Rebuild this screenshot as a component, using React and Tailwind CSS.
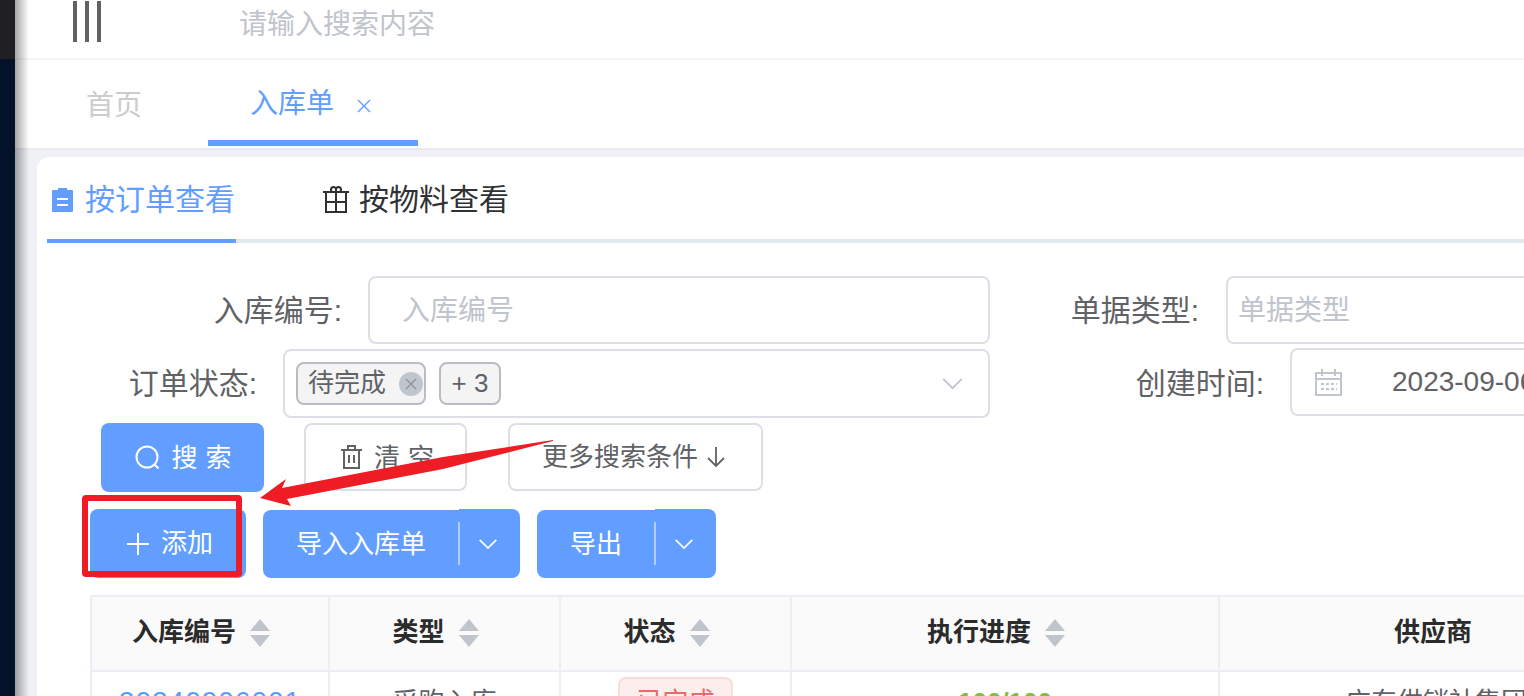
import React from 'react';

const FONT = "font-['Liberation_Sans','Noto_Sans_CJK_SC',sans-serif]";

const Chevron = ({ className }) => (
    <svg className={className} viewBox="0 0 24 14" fill="none" stroke="currentColor" strokeWidth="2">
        <path d="M2 2l10 10L22 2" />
    </svg>
);

const Caret = () => (
    <svg className="w-5 h-7 shrink-0" viewBox="0 0 20 28" fill="#c0c4cc">
        <path d="M10 0l10 12H0z" />
        <path d="M0 16h20L10 28z" />
    </svg>
);

const HeadCell = ({ label, sort }) => (
    <div className={`flex items-center justify-center gap-[14px] pb-[2px] border-r-2 border-[#ebeef5] text-[26px] font-bold text-[#2b2b2b] ${sort ? 'pr-[18px]' : ''}`}>
        <span>{label}</span>
        {sort && <Caret />}
    </div>
);

const SplitButton = ({ label, leftWidth }) => (
    <div className="flex items-end h-[69px] text-white text-[26px]">
        <div className={`flex items-center justify-center h-[68px] bg-[#619eff] rounded-l-lg ${leftWidth}`}>{label}</div>
        <div className="relative flex items-center justify-center w-[61px] h-[69px] pr-1 bg-[#619eff] rounded-r-lg">
            <div className="absolute left-[-1px] top-[13px] w-0.5 h-[43px] bg-white/50"></div>
            <Chevron className="w-[20px] h-[12px]" />
        </div>
    </div>
);

const App = () => {
    return (
        <div className={`${FONT} relative flex w-full h-[696px] overflow-hidden bg-white`}>
            {/* Dark sidebar edge */}
            <div className="flex flex-col w-[15px] shrink-0">
                <div className="h-[59px] bg-[#1f1f24]"></div>
                <div className="flex-1 bg-[#031228]"></div>
            </div>

            <div className="relative flex flex-col flex-1 min-w-0">
                <div className="absolute inset-y-0 left-0 w-[14px] bg-gradient-to-r from-black/35 to-transparent"></div>

                {/* Top bar */}
                <div className="flex items-center h-[60px] shrink-0 border-b-2 border-[#f5f5f6]">
                    <div className="flex justify-between w-[28px] h-[41px] ml-[58px] mb-[16px]">
                        <div className="w-1 bg-[#606266]"></div>
                        <div className="w-1 bg-[#606266]"></div>
                        <div className="w-1 bg-[#606266]"></div>
                    </div>
                    <span className="ml-[138px] mb-[8px] text-[28px] text-[#c0c4cc]">请输入搜索内容</span>
                </div>

                {/* Page tabs */}
                <div className="flex h-[90px] shrink-0 border-b-2 border-[#e8eaee]">
                    <div className="flex items-center w-[193px] h-[84px] pl-[71px] pt-2 text-[28px] text-[#cccccc]">首页</div>
                    <div className="flex items-center w-[210px] h-[86px] pl-[42px] pt-2 border-b-[6px] border-[#619eff] text-[28px] text-[#619eff]">
                        入库单
                        <svg className="w-4 h-4 ml-[22px] mt-1" viewBox="0 0 16 16" stroke="currentColor" strokeWidth="1.4">
                            <path d="M2 2l12 12M14 2L2 14" />
                        </svg>
                    </div>
                </div>

                {/* Content */}
                <div className="flex-1 min-h-0 pl-[22px] pt-[7px] bg-[#f0f1f5]">
                    <div className="h-full pl-[10px] pt-px bg-white rounded-tl-xl overflow-hidden">
                        {/* View tabs */}
                        <div className="flex h-[85px] border-b-4 border-[#e4e7ed] text-[30px]">
                            <div className="flex items-center w-[189px] h-[85px] pl-[5px] gap-[12px] pt-[2px] border-b-4 border-[#619eff] text-[#619eff]">
                                <svg className="w-[21px] h-[25px]" viewBox="0 0 21 25">
                                    <path fill="currentColor" fillRule="evenodd" d="M1 3h5V1h9v2h5a1 1 0 011 1v20a1 1 0 01-1 1H1a1 1 0 01-1-1V4a1 1 0 011-1zm4 8v2h11v-2zm0 6v2h11v-2z" />
                                </svg>
                                按订单查看
                            </div>
                            <div className="flex items-center gap-[10px] ml-[87px] pt-[2px] h-[81px] text-[#303133]">
                                <svg className="w-[26px] h-[27px]" viewBox="0 0 26 27" fill="none" stroke="currentColor" strokeWidth="2">
                                    <path d="M3 6h20v20H3zM0 6h26M3 16h20M13 6v20M13 6V3.500a2.500 2.500 0 00-5 0C8 5 9 6 10 6M13 6V3.500a2.500 2.500 0 015 0C18 5 17 6 16 6" />
                                </svg>
                                按物料查看
                            </div>
                        </div>

                        {/* Filters */}
                        <div className="flex items-center h-[68px] mt-[33px]">
                            <div className="w-[295px] text-right text-[30px] text-[#606266]">入库编号:</div>
                            <div className="flex items-center w-[622px] h-full ml-[26px] pl-[32px] pt-[2px] border-2 border-[#dcdfe6] rounded-lg text-[28px] text-[#c0c4cc]">入库编号</div>
                            <div className="w-[209px] text-right text-[30px] text-[#606266]">单据类型:</div>
                            <div className="flex items-center flex-1 h-full ml-[27px] pl-[10px] pt-[2px] border-2 border-r-0 border-[#dcdfe6] rounded-l-lg text-[28px] text-[#c0c4cc]">单据类型</div>
                        </div>
                        <div className="flex h-[70px] mt-[4px]">
                            <div className="self-center w-[210px] text-right text-[30px] text-[#606266]">订单状态:</div>
                            <div className="flex items-center self-end w-[707px] h-[69px] ml-[26px] pl-[11px] pr-[24px] border-2 border-[#dcdfe6] rounded-lg text-[26px] text-[#606266]">
                                <div className="flex items-center w-[130px] h-[43px] pl-[10px] border-2 border-[#b9bcc4] rounded-lg bg-[#f4f4f5]">
                                    待完成
                                    <span className="flex items-center justify-center w-6 h-6 ml-[13px] rounded-full bg-[#c0c4cc]">
                                        <svg className="w-3 h-3" viewBox="0 0 12 12" stroke="#8e929c" strokeWidth="1.3">
                                            <path d="M1 1l10 10M11 1L1 11" />
                                        </svg>
                                    </span>
                                </div>
                                <div className="flex items-center justify-center w-[62px] h-[43px] ml-[13px] border-2 border-[#b9bcc4] rounded-lg bg-[#f4f4f5]">+ 3</div>
                                <Chevron className="w-[23px] h-[13px] ml-auto text-[#c0c4cc]" />
                            </div>
                            <div className="self-center w-[274px] text-right text-[30px] text-[#606266]">创建时间:</div>
                            <div className="flex items-center flex-1 h-[68px] ml-[26px] pl-[23px] border-2 border-r-0 border-[#dcdfe6] rounded-l-lg text-[28px] text-[#606266] whitespace-nowrap overflow-hidden">
                                <svg className="w-[27px] h-[27px] shrink-0 text-[#c0c4cc]" viewBox="0 0 27 27" fill="none" stroke="currentColor" strokeWidth="2">
                                    <path d="M1 4h25v22H1zM1 10h25M7 0v7M20 0v7" />
                                    <path strokeDasharray="3 2" d="M6 15h16M6 20h16" />
                                </svg>
                                <span className="ml-[50px]">2023-09-06</span>
                            </div>
                        </div>

                        {/* Search buttons */}
                        <div className="flex items-start h-[69px] ml-[54px] mt-[5px] text-[26px]">
                            <div className="flex items-center justify-center gap-[11px] w-[163px] h-[69px] pl-[2px] rounded-lg bg-[#619eff] text-white">
                                <svg className="w-[25px] h-[25px]" viewBox="0 0 25 25" fill="none" stroke="currentColor" strokeWidth="2">
                                    <circle cx="12" cy="12" r="10.500" />
                                    <path d="M19.500 19.500l4 4" />
                                </svg>
                                <span className="tracking-[8px] -mr-2 pt-[2px]">搜索</span>
                            </div>
                            <div className="flex items-center justify-center gap-[12px] w-[163px] h-[68px] pl-1 ml-10 border-2 border-[#dcdfe6] rounded-lg text-[#606266]">
                                <svg className="w-[21px] h-[24px]" viewBox="0 0 21 24" fill="none" stroke="currentColor" strokeWidth="2">
                                    <path d="M0 5h21M7 5V1h7v4M3 5v18h15V5M8 10v8M13 10v8" />
                                </svg>
                                <span className="tracking-[8px] -mr-2 pt-[2px]">清空</span>
                            </div>
                            <div className="flex items-center justify-center gap-[9px] w-[255px] h-[68px] pr-1 ml-[41px] border-2 border-[#dcdfe6] rounded-lg text-[#606266]">
                                更多搜索条件
                                <svg className="w-[18px] h-[20px]" viewBox="0 0 18 20" fill="none" stroke="currentColor" strokeWidth="1.800">
                                    <path d="M9 0v19M1 11l8 8 8-8" />
                                </svg>
                            </div>
                        </div>

                        {/* Actions */}
                        <div className="flex h-[69px] ml-[43px] mt-[17px] gap-[17px] text-[26px] text-white">
                            <div className="flex items-center justify-center gap-[12px] w-[156px] pl-1 rounded-lg bg-[#619eff]">
                                <svg className="w-[22px] h-[22px]" viewBox="0 0 22 22" stroke="currentColor" strokeWidth="2">
                                    <path d="M11 0v22M0 11h22" />
                                </svg>
                                添加
                            </div>
                            <SplitButton label="导入入库单" leftWidth="w-[196px]" />
                            <SplitButton label="导出" leftWidth="w-[118px]" />
                        </div>

                        {/* Table */}
                        <div className="ml-[43px] mt-[17px] w-[1557px] border-t-2 border-l-2 border-[#ebeef5]">
                            <div className="grid grid-cols-[238px_231px_231px_428px_428px] h-[75px] border-b-2 border-[#ebeef5] bg-[#fafafa]">
                                <HeadCell label="入库编号" sort />
                                <HeadCell label="类型" sort />
                                <HeadCell label="状态" sort />
                                <HeadCell label="执行进度" sort />
                                <HeadCell label="供应商" />
                            </div>
                            <div className="grid grid-cols-[238px_231px_231px_428px_428px] h-[60px] text-[26px] text-[#606266]">
                                <div className="flex items-center justify-center border-r-2 border-[#ebeef5] text-[28px] tracking-[1px] text-[#5a9cff]">20240906001</div>
                                <div className="flex items-center justify-center border-r-2 border-[#ebeef5]">采购入库</div>
                                <div className="flex justify-center pt-[5px] border-r-2 border-[#ebeef5]">
                                    <div className="flex items-center justify-center w-[115px] h-[50px] border-2 border-[#fbdcdc] rounded-lg bg-[#fdeeee] text-[#e86a6a]">已完成</div>
                                </div>
                                <div className="flex items-center justify-center border-r-2 border-[#ebeef5] font-bold text-[#7cc13e]">100/100</div>
                                <div className="flex items-center justify-center pl-[6px] border-r-2 border-[#ebeef5] whitespace-nowrap">广东供销社集团</div>
                            </div>
                        </div>
                    </div>
                </div>
            </div>

            {/* Red annotation drawn over the screenshot */}
            <div className="absolute left-[82px] top-[495px] w-[160px] h-[82px] border-[6px] border-[#ee1c25] rounded-sm"></div>
            <svg className="absolute left-[255px] top-[436px] w-[302px] h-[74px]" viewBox="255 436 302 74">
                <path fill="#ee1c25" d="M260 498L286 479L282 488L443 457L553 440L553 441L443 469L287 499L291 506Z" />
            </svg>
        </div>
    );
};

export default App;
